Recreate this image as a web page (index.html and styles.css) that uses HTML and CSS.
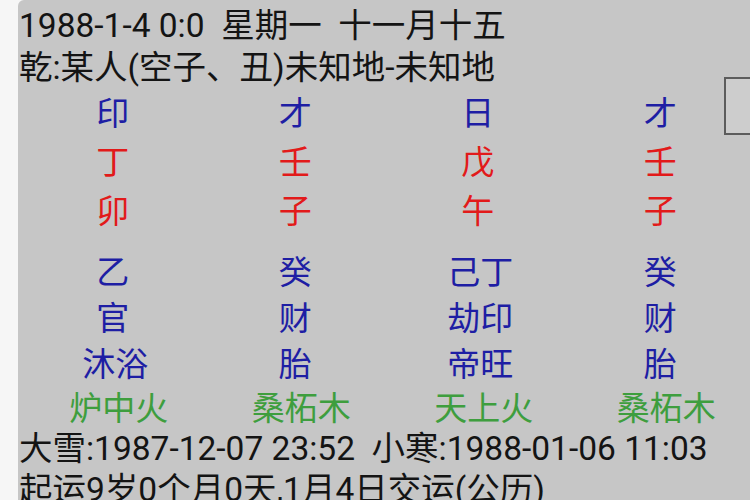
FILE: index.html
```html
<!DOCTYPE html>
<html lang="zh-CN">
<head>
<meta charset="utf-8">
<title>八字排盘</title>
<link rel="stylesheet" href="styles.css">
</head>
<body>
<div class="panel">
  <div class="line">1988-1-4 0:0&nbsp;&nbsp;星期一&nbsp;&nbsp;十一月十五</div>
  <div class="line">乾:某人(空子、丑)未知地-未知地</div>
  <div class="grid top">
    <div class="c blue">印</div><div class="c blue">才</div><div class="c blue">日</div><div class="c blue">才</div>
    <div class="c red">丁</div><div class="c red">壬</div><div class="c red">戊</div><div class="c red">壬</div>
    <div class="c red">卯</div><div class="c red">子</div><div class="c red">午</div><div class="c red">子</div>
  </div>
  <div class="grid bottom">
    <div class="c blue">乙</div><div class="c blue">癸</div><div class="c blue w2">己丁</div><div class="c blue">癸</div>
    <div class="c blue">官</div><div class="c blue">财</div><div class="c blue w2">劫印</div><div class="c blue">财</div>
    <div class="c blue w2">沐浴</div><div class="c blue">胎</div><div class="c blue w2">帝旺</div><div class="c blue">胎</div>
    <div class="c green w3">炉中火</div><div class="c green w3">桑柘木</div><div class="c green w3">天上火</div><div class="c green w3">桑柘木</div>
  </div>
  <div class="line jieqi">大雪:1987-12-07 23:52&nbsp;&nbsp;小寒:1988-01-06 11:03</div>
  <div class="line qiyun">起运9岁0个月0天,1月4日交运(公历)</div>
  <div class="thumb"></div>
</div>
</body>
</html>
```
FILE: styles.css
```css
html, body {
  margin: 0;
  padding: 0;
  width: 750px;
  height: 500px;
  overflow: hidden;
  background: #f6f6f6;
}
body {
  font-family: Roboto, "Noto Sans CJK SC", sans-serif;
  font-size: 33.5px;
  color: #141414;
}
.panel {
  position: relative;
  margin-left: 18px;
  height: 500px;
  box-sizing: border-box;
  padding: 5px 0 0 1px;
  background: #c6c6c6;
  border-top-left-radius: 6px;
  overflow: hidden;
}
.line {
  line-height: 42px;
  white-space: nowrap;
}
.grid {
  display: grid;
  grid-template-columns: repeat(4, 1fr);
  padding-left: 1px;
}
.top {
  grid-auto-rows: 49px;
  line-height: 49px;
}
.bottom {
  margin-top: 14px;
  grid-template-rows: 46px 46px 46px 42px;
}
.bottom .c {
  line-height: 46px;
}
.c {
  text-align: center;
  white-space: nowrap;
  padding-left: 3px;
  font-size: 33px;
}
.c.w2 { padding-left: 8px; }
.c.w3 { padding-left: 15px; }
.blue { color: #1e1ea4; }
.red { color: #e21a1a; }
.bottom .green { color: #3e9e3e; line-height: 42px; }
.jieqi { line-height: 38px; }
.qiyun { line-height: 44px; }
.thumb {
  position: absolute;
  top: 77px;
  left: 706px;
  width: 30px;
  height: 54px;
  border: 2px solid #5c5c5c;
  background: #cdcdcd;
}
```
